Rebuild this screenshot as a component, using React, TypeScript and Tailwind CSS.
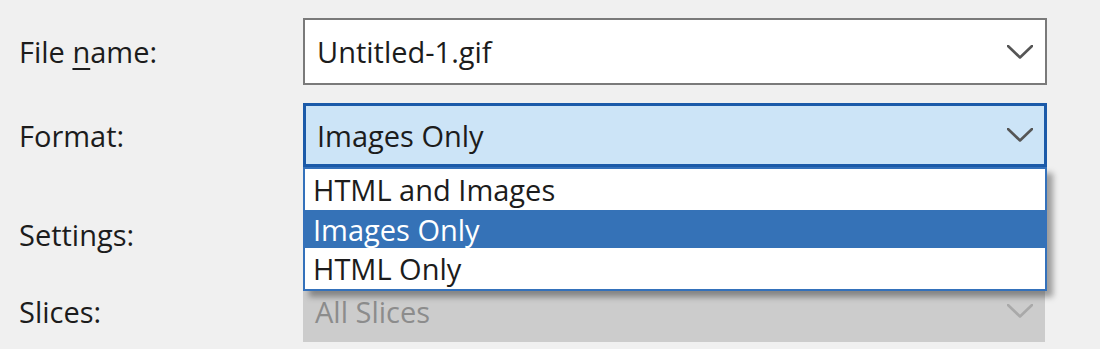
function Chevron({ color }: { color: string }) {
  return (
    <svg width="26" height="14" viewBox="0 0 26 14" fill="none" className="shrink-0">
      <polyline points="1,1 13,12.5 25,1" stroke={color} strokeWidth={2.6} strokeLinecap="round" strokeLinejoin="round" />
    </svg>
  );
}

function Label({ children }: { children: React.ReactNode }) {
  return <div className="w-[303px] pl-[19px] text-[#1c1c1c]">{children}</div>;
}

function App() {
  const options = ['HTML and Images', 'Images Only', 'HTML Only'];
  const selected = 'Images Only';

  return (
    <div
      className="w-[1100px] h-[349px] bg-[#f0f0f0] overflow-hidden pt-[18px] text-[29px] font-medium leading-none"
      style={{ fontFamily: '"Open Sans", "Noto Sans", sans-serif' }}
    >
      {/* File name */}
      <div className="flex items-center h-[67px]">
        <Label>
          File <u className="underline-offset-[5px] decoration-2">n</u>ame:
        </Label>
        <div className="w-[744px] h-full bg-white border-2 border-[#7a7a7a] flex items-center justify-between pl-[12px] pr-[12px]">
          <span className="text-[#1c1c1c]">Untitled-1.gif</span>
          <Chevron color="#555555" />
        </div>
      </div>

      {/* Format */}
      <div className="flex items-center h-[64px] mt-[18px]">
        <Label>Format:</Label>
        <div className="relative w-[744px] h-full">
          <div className="h-full bg-[#cce4f7] border-[3px] border-[#1b5aa9] flex items-center justify-between pl-[11px] pr-[11px]">
            <span className="text-[#1c1c1c]">Images Only</span>
            <Chevron color="#555555" />
          </div>

          {/* Open dropdown list */}
          <div className="absolute left-0 top-full w-[744px] z-10 bg-white border-2 border-[#3471bb] shadow-[6px_6px_6px_rgba(0,0,0,0.35)] flex flex-col">
            {options.map((o) => (
              <div
                key={o}
                className={`flex items-center pl-[8px] ${o === selected ? 'h-[38px] bg-[#3572b7] text-white' : 'h-[41px] text-[#1c1c1c]'}`}
              >
                {o}
              </div>
            ))}
          </div>
        </div>
      </div>

      {/* Settings (control hidden under the open list) */}
      <div className="flex items-center h-[64px] mt-[35px]">
        <Label>Settings:</Label>
        <div className="w-[744px] h-full bg-white border-2 border-[#7a7a7a]" />
      </div>

      {/* Slices (disabled) */}
      <div className="flex items-center h-[62px] mt-[14px]">
        <Label>Slices:</Label>
        <div className="w-[742px] h-full bg-[#cccccc] flex items-center justify-between pl-[12px] pr-[12px]">
          <span className="text-[#8c8c8c]">All Slices</span>
          <Chevron color="#a9a9a9" />
        </div>
      </div>
    </div>
  );
}

export default App;
